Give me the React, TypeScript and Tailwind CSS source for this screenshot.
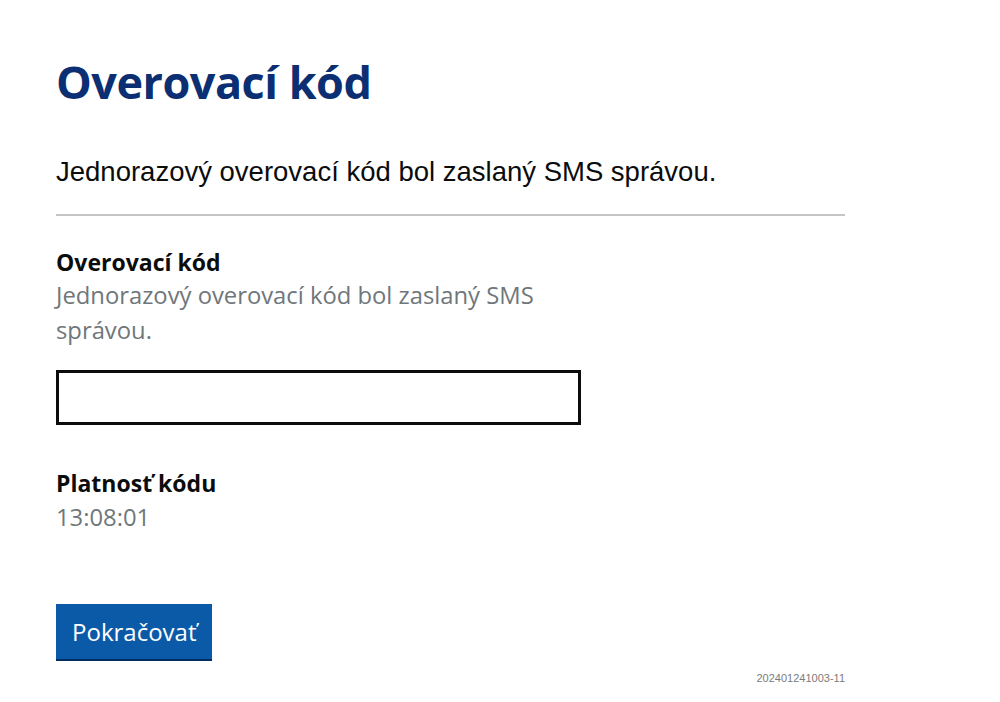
export default function App() {
  return (
    <div className="min-h-[702px] bg-white">
      <main className="w-[789px] ml-[56px] pt-[52px] font-['Open_Sans',sans-serif]">
        <h1 className="text-[45px] leading-[60px] font-bold text-[#0b2f72] tracking-[-0.5px]">
          Overovací kód
        </h1>

        <p className="mt-[44px] font-['Liberation_Sans',Arial,sans-serif] text-[27.5px] leading-[32px] text-[#0b0c0c]">
          Jednorazový overovací kód bol zaslaný SMS správou.
        </p>

        <hr className="mt-[26px] border-0 h-[2px] bg-[#c5c5c5]" />

        {/* code field */}
        <div className="mt-[31px] w-[525px]">
          <label htmlFor="code" className="block text-[23px] leading-[30px] font-bold text-[#0b0c0c]">
            Overovací kód
          </label>
          <div className="mt-[1px] text-[23.8px] leading-[35px] text-[#6f777b]">
            Jednorazový overovací kód bol zaslaný SMS správou.
          </div>
          <input
            id="code"
            type="text"
            className="mt-[22px] block w-[525px] h-[55px] border-[3px] border-[#0b0c0c] bg-white outline-none"
          />
        </div>

        <div className="mt-[43px]">
          <div className="text-[23px] leading-[30px] font-bold text-[#0b0c0c]">Platnosť kódu</div>
          <div className="mt-[2px] text-[23.8px] leading-[35px] text-[#6f777b]">13:08:01</div>
        </div>

        <button className="mt-[69px] h-[55px] px-[16px] bg-[#0b5aa8] text-white text-[24px] shadow-[0_2px_0_#002d62]">
          Pokračovať
        </button>

        <div className="mt-[12px] text-right font-['Liberation_Sans',Arial,sans-serif] text-[11px] leading-[14px] text-[#7c7c7c]">
          202401241003-11
        </div>
      </main>
    </div>
  )
}
